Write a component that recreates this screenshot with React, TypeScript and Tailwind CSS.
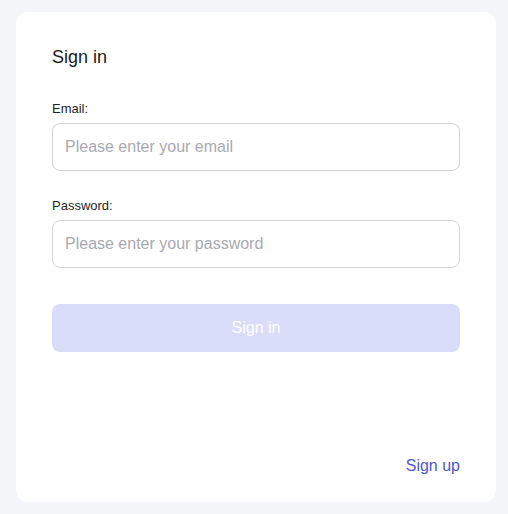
const App = () => {
  return (
    <div
      className="min-h-[514px] w-full bg-[#f3f5f9] pt-3 pb-3 pl-4 pr-3"
      style={{ fontFamily: '"Liberation Sans", Arial, sans-serif' }}
    >
      <div className="flex h-[490px] flex-col rounded-xl bg-white px-9 pt-[33px] pb-6">
        <h1 className="text-lg leading-6 text-[#1a1a1a]">Sign in</h1>

        <label className="mt-[31px] text-[13px] leading-[18px] text-[#1f1f1f]">Email:</label>
        <input
          type="email"
          placeholder="Please enter your email"
          className="mt-[5px] h-12 w-full rounded-lg border border-[#d4d4d8] px-3 text-base text-[#1f1f1f] outline-none placeholder:text-[#a9a9ae]"
        />

        <label className="mt-[26px] text-[13px] leading-[18px] text-[#1f1f1f]">Password:</label>
        <input
          type="password"
          placeholder="Please enter your password"
          className="mt-[5px] h-12 w-full rounded-lg border border-[#d4d4d8] px-3 text-base text-[#1f1f1f] outline-none placeholder:text-[#a9a9ae]"
        />

        <button
          disabled
          className="mt-9 h-12 w-full rounded-lg bg-[#d9ddf9] text-base text-white"
        >
          Sign in
        </button>

        <div className="mt-auto flex justify-end">
          <a href="#" className="text-base leading-6 text-[#5256c8]">
            Sign up
          </a>
        </div>
      </div>
    </div>
  );
};

export default App;
